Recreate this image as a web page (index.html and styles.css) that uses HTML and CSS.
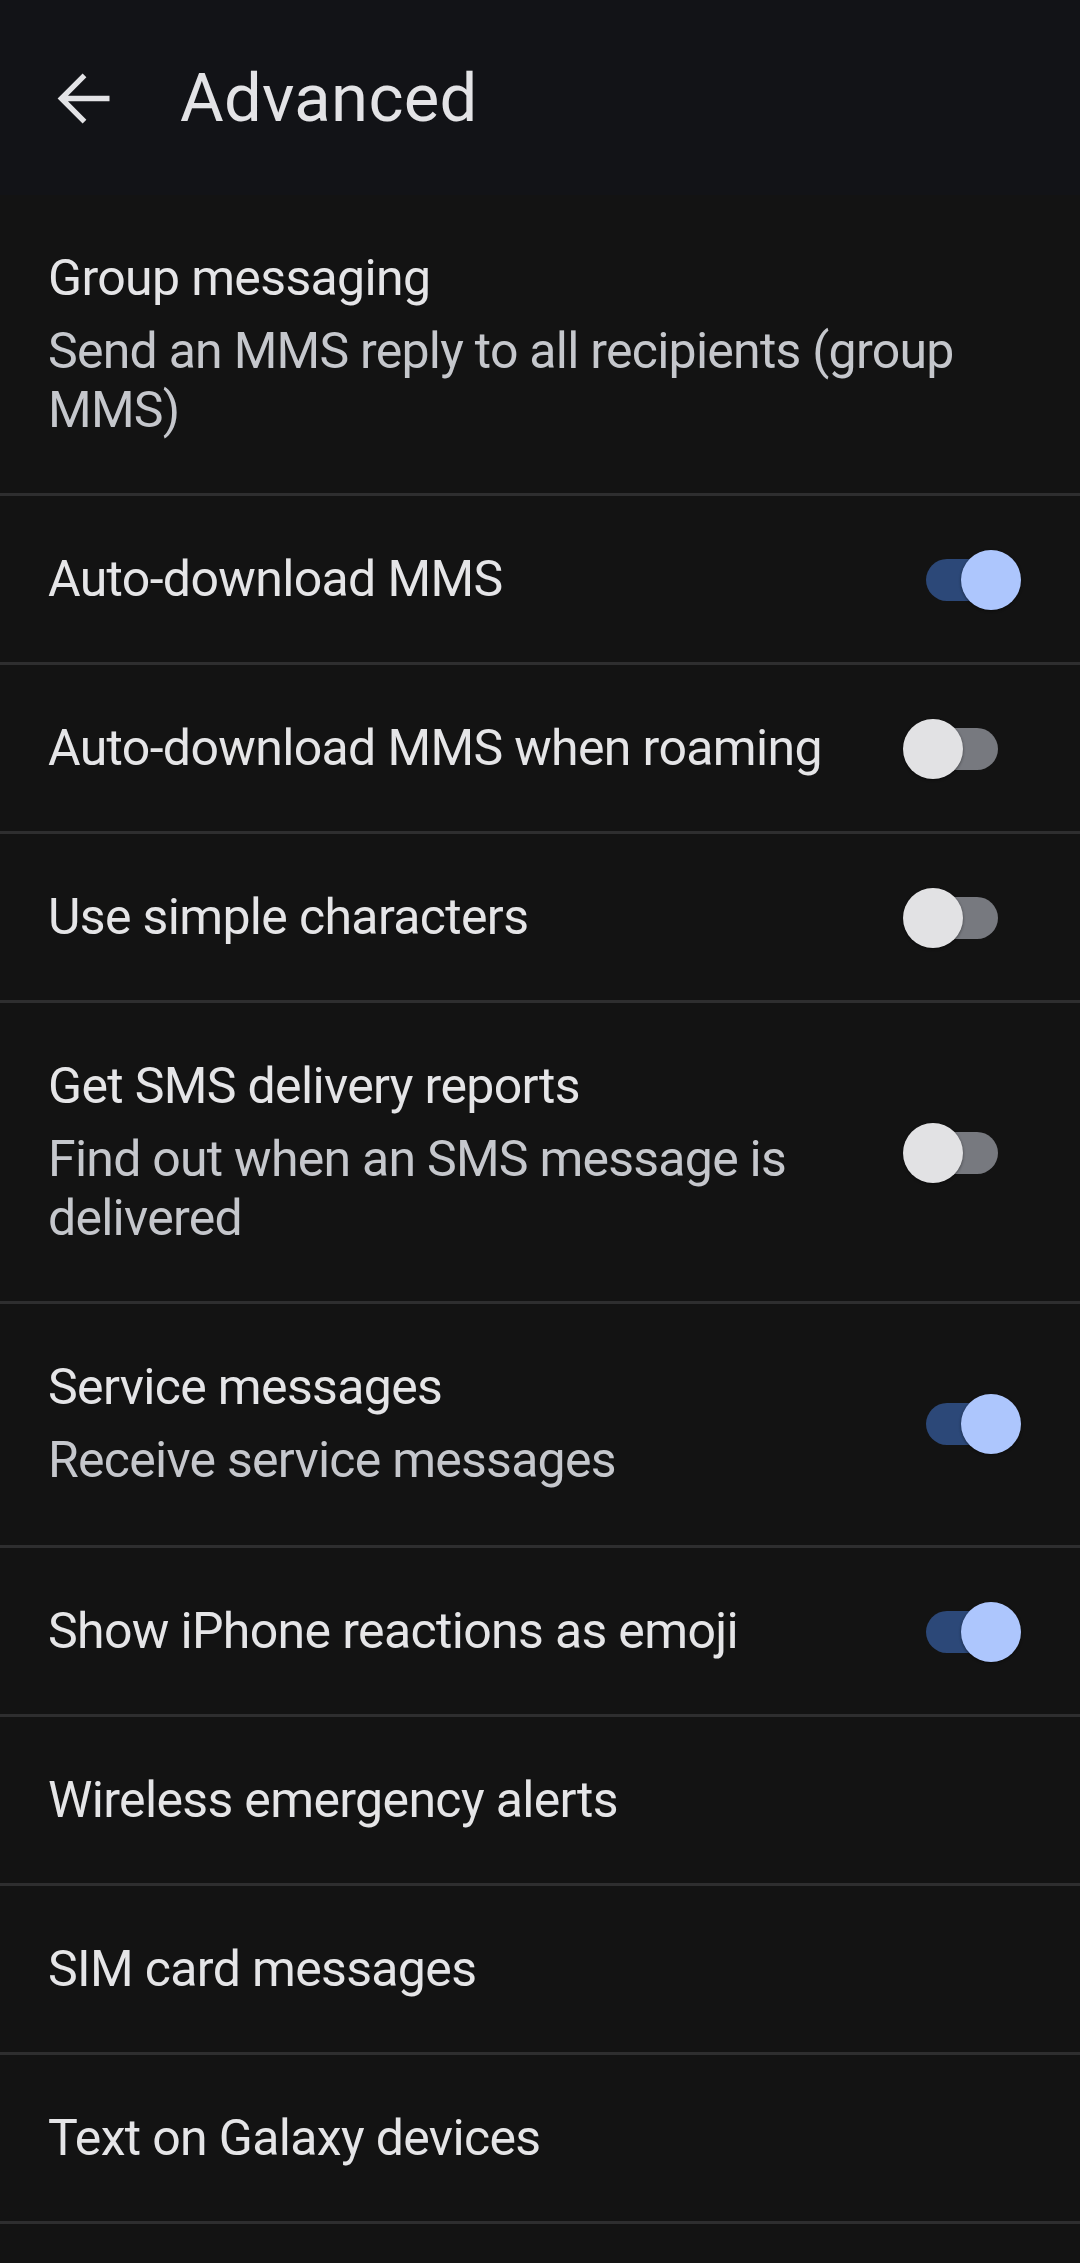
FILE: index.html
```html
<!DOCTYPE html>
<html lang="en">
<head>
<meta charset="utf-8">
<title>Advanced</title>
<link rel="stylesheet" href="styles.css">
</head>
<body>
<header class="appbar">
  <svg class="back" viewBox="0 0 24 24" width="75" height="75" aria-hidden="true">
    <path d="M20 12H5M12 4.6L4.6 12l7.4 7.4" fill="none" stroke="#e3e3e6" stroke-width="1.7" stroke-linecap="butt" stroke-linejoin="miter"/>
  </svg>
  <h1 class="title">Advanced</h1>
</header>
<main class="list">
  <div class="row">
    <div class="text wide">
      <div class="label">Group messaging</div>
      <div class="sub">Send an MMS reply to all recipients (group MMS)</div>
    </div>
  </div>
  <div class="row">
    <div class="text"><div class="label">Auto-download MMS</div></div>
    <div class="switch on"></div>
  </div>
  <div class="row">
    <div class="text"><div class="label">Auto-download MMS when roaming</div></div>
    <div class="switch"></div>
  </div>
  <div class="row">
    <div class="text"><div class="label">Use simple characters</div></div>
    <div class="switch"></div>
  </div>
  <div class="row">
    <div class="text">
      <div class="label">Get SMS delivery reports</div>
      <div class="sub">Find out when an SMS message is delivered</div>
    </div>
    <div class="switch"></div>
  </div>
  <div class="row two">
    <div class="text">
      <div class="label">Service messages</div>
      <div class="sub">Receive service messages</div>
    </div>
    <div class="switch on"></div>
  </div>
  <div class="row">
    <div class="text"><div class="label">Show iPhone reactions as emoji</div></div>
    <div class="switch on"></div>
  </div>
  <div class="row">
    <div class="text wide"><div class="label">Wireless emergency alerts</div></div>
  </div>
  <div class="row">
    <div class="text wide"><div class="label">SIM card messages</div></div>
  </div>
  <div class="row">
    <div class="text wide"><div class="label">Text on Galaxy devices</div></div>
  </div>
</main>
</body>
</html>
```
FILE: styles.css
```css
html, body {
  margin: 0;
  padding: 0;
  background: #131313;
}
body {
  font-family: Roboto, "Noto Sans", sans-serif;
  color: #e4e4e6;
  width: 1080px;
  min-height: 2263px;
}
.appbar {
  height: 195px;
  background: #121317;
  display: flex;
  align-items: center;
  box-sizing: border-box;
  padding-left: 47px;
}
.back {
  display: block;
  flex: none;
  margin-top: 2px;
}
.title {
  margin: 0 0 0 58px;
  font-size: 67px;
  font-weight: 400;
  line-height: 80px;
  color: #e3e3e6;
  letter-spacing: 0.3px;
}
.list {
  display: flex;
  flex-direction: column;
}
.row {
  display: flex;
  align-items: center;
  box-sizing: border-box;
  padding: 54px 0 53px 48px;
  border-bottom: 3px solid #2e2e2f;
}
.row.two {
  padding-bottom: 55px;
}
.text {
  flex: 1;
  min-width: 0;
  padding-right: 50px;
}
.text.wide {
  padding-right: 46px;
}
.label {
  font-size: 50px;
  line-height: 59px;
  letter-spacing: -0.65px;
  color: #e5e5e7;
}
.sub {
  margin-top: 14px;
  font-size: 50px;
  line-height: 59px;
  letter-spacing: -0.75px;
  color: #c5c7cc;
}
.switch {
  flex: none;
  position: relative;
  width: 86px;
  height: 42px;
  border-radius: 21px;
  background: #77797f;
  margin-right: 82px;
}
.switch::after {
  content: "";
  position: absolute;
  top: -9px;
  left: -9px;
  width: 60px;
  height: 60px;
  border-radius: 50%;
  background: #e2e2e4;
  box-shadow: 0 1px 3px rgba(0, 0, 0, 0.45);
}
.switch.on {
  background: #2c4878;
  margin-right: 68px;
}
.switch.on::after {
  left: 35px;
  background: #adc6fd;
}
```
